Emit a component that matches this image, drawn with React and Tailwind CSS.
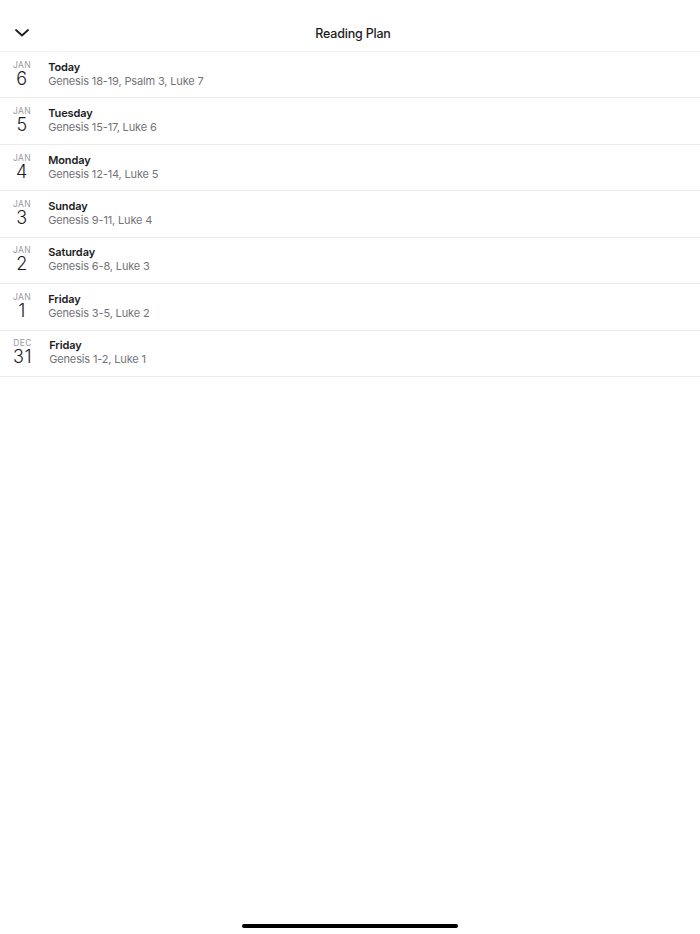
import React from "react";

const rows = [
  { m: "JAN", d: "6", t: "Today", s: "Genesis 18-19, Psalm 3, Luke 7" },
  { m: "JAN", d: "5", t: "Tuesday", s: "Genesis 15-17, Luke 6" },
  { m: "JAN", d: "4", t: "Monday", s: "Genesis 12-14, Luke 5" },
  { m: "JAN", d: "3", t: "Sunday", s: "Genesis 9-11, Luke 4" },
  { m: "JAN", d: "2", t: "Saturday", s: "Genesis 6-8, Luke 3" },
  { m: "JAN", d: "1", t: "Friday", s: "Genesis 3-5, Luke 2" },
  { m: "DEC", d: "31", t: "Friday", s: "Genesis 1-2, Luke 1" },
];

export default function App() {
  return (
    <div
      className="w-[700px] h-[934px] bg-white flex flex-col relative overflow-hidden"
      style={{ fontFamily: "Inter, 'Noto Sans', sans-serif" }}
    >
      <div className="h-[52px] flex items-center relative border-b border-[#f0f0f0] shrink-0">
        <div className="pl-[14px] pt-[14px]">
          <svg width="16" height="16" viewBox="0 0 16 16" fill="none">
            <path d="M2 5 L8 10.5 L14 5" stroke="#1c1c1e" strokeWidth="1.8" strokeLinecap="round" strokeLinejoin="round" />
          </svg>
        </div>
        <div className="absolute left-0 right-0 top-0 h-[52px] flex items-center justify-center pl-[6px] pt-[16px] pointer-events-none">
          <span className="text-[12.5px] font-medium text-[#1c1c1e] tracking-[-0.2px]">Reading Plan</span>
        </div>
      </div>
      <div className="flex flex-col">
        {rows.map((r, i) => (
          <div key={i} className="h-[46.43px] border-b border-[#ececec] flex items-center pl-[13px] gap-[17px]">
            <div className="flex flex-col items-center min-w-[18px] pb-[2px]">
              <span className="text-[8.5px] leading-[10px] text-[#9a9a9e] tracking-[0.4px]">{r.m}</span>
              <span className="text-[18px] leading-[18px] font-light text-[#1c1c1e] tracking-[0.6px]">{r.d}</span>
            </div>
            <div className="flex flex-col pb-[1px]">
              <span className="text-[11px] leading-[13px] font-semibold text-[#1c1c1e] tracking-[-0.1px]">{r.t}</span>
              <span className="text-[11px] leading-[14px] text-[#737378] tracking-[-0.15px]">{r.s}</span>
            </div>
          </div>
        ))}
      </div>
      <div className="absolute left-[242px] top-[924px] w-[216px] h-[4px] rounded-full bg-black" />
    </div>
  );
}
